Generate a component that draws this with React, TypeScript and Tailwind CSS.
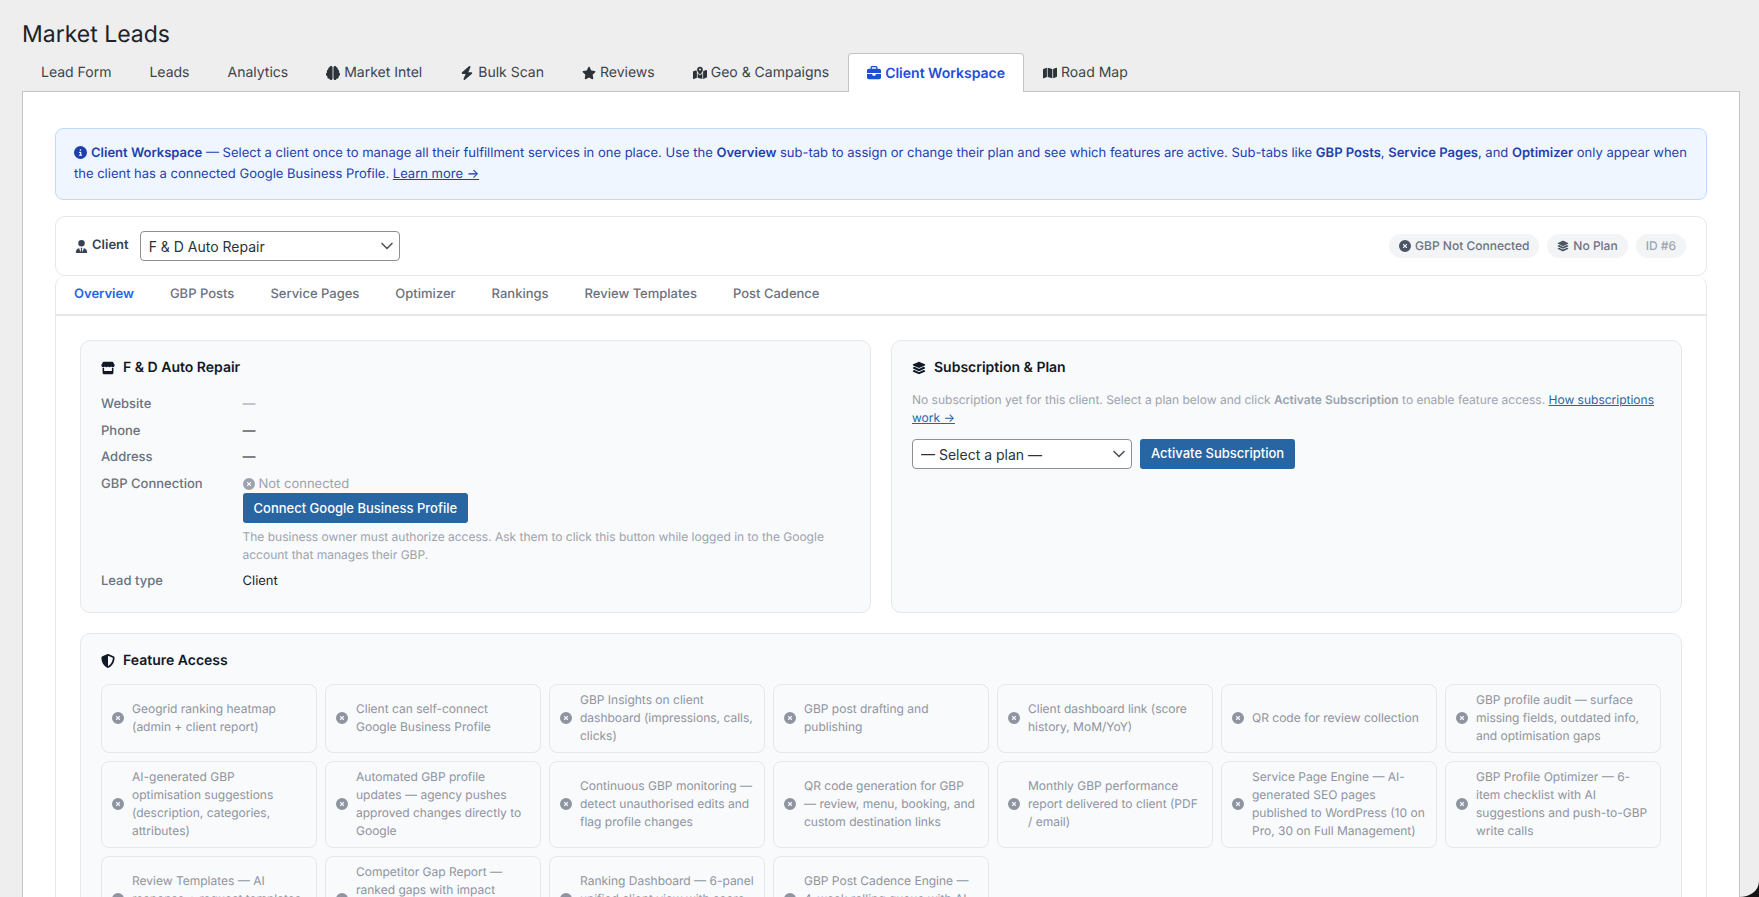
import React from "react";
import { ChevronDown } from "lucide-react";
import {
  FaBrain, FaBolt, FaStar, FaMapLocationDot, FaBriefcase, FaMap, FaCircleInfo, FaUserTie,
  FaCircleXmark, FaLayerGroup, FaStore, FaShieldHalved,
} from "react-icons/fa6";

const tabs: { label: string; Icon?: React.ComponentType<{ className?: string }>; active?: boolean }[] = [
  { label: "Lead Form" },
  { label: "Leads" },
  { label: "Analytics" },
  { label: "Market Intel", Icon: FaBrain },
  { label: "Bulk Scan", Icon: FaBolt },
  { label: "Reviews", Icon: FaStar },
  { label: "Geo & Campaigns", Icon: FaMapLocationDot },
  { label: "Client Workspace", Icon: FaBriefcase, active: true },
  { label: "Road Map", Icon: FaMap },
];

const subTabs = ["Overview", "GBP Posts", "Service Pages", "Optimizer", "Rankings", "Review Templates", "Post Cadence"];

const features = [
  "Geogrid ranking heatmap (admin + client report)",
  "Client can self-connect Google Business Profile",
  "GBP Insights on client dashboard (impressions, calls, clicks)",
  "GBP post drafting and publishing",
  "Client dashboard link (score history, MoM/YoY)",
  "QR code for review collection",
  "GBP profile audit — surface missing fields, outdated info, and optimisation gaps",
  "AI-generated GBP optimisation suggestions (description, categories, attributes)",
  "Automated GBP profile updates — agency pushes approved changes directly to Google",
  "Continuous GBP monitoring — detect unauthorised edits and flag profile changes",
  "QR code generation for GBP — review, menu, booking, and custom destination links",
  "Monthly GBP performance report delivered to client (PDF / email)",
  "Service Page Engine — AI-generated SEO pages published to WordPress (10 on Pro, 30 on Full Management)",
  "GBP Profile Optimizer — 6-item checklist with AI suggestions and push-to-GBP write calls",
  "Review Templates — AI response + request templates per client",
  "Competitor Gap Report — ranked gaps with impact scores and one-click fix actions",
  "Ranking Dashboard — 6-panel unified client view with score trends",
  "GBP Post Cadence Engine — 4-week rolling queue with AI drafts",
];

function Row({ label, children }: { label: string; children: React.ReactNode }) {
  return (
    <div className="flex py-1 text-[13px] leading-[18.5px]">
      <div className="w-[141.5px] shrink-0 font-medium text-[#6b7280]">{label}</div>
      <div className="min-w-0 flex-1 text-[#1d2327]">{children}</div>
    </div>
  );
}

function Chevron() {
  return (
    <ChevronDown className="pointer-events-none absolute right-[3px] top-1/2 h-5 w-5 -translate-y-1/2 text-[#50575e]" />
  );
}

function Button({ children }: { children: React.ReactNode }) {
  return (
    <button className="h-[30px] rounded-[3px] bg-[#2865a3] px-[11px] text-[13px] font-medium text-white">
      {children}
    </button>
  );
}

export default function App() {
  return (
    <div className="relative h-[897px] overflow-hidden bg-[#eeeeef] pl-[22px] pr-[19px] pt-[22px] font-[Inter,'Liberation_Sans',sans-serif] [text-rendering:geometricPrecision]">
      <h1 className="mb-[7px] text-[23px] font-normal leading-[24px] text-[#1d2327]">Market Leads</h1>

      <div className="relative z-10 flex h-[39px] items-stretch">
        {tabs.map(({ label, Icon, active }) => (
          <div
            key={label}
            className={
              active
                ? "flex h-[39px] items-center gap-1 rounded-t-[4px] border border-b-0 border-[#c3c4c7] bg-white px-[18px] text-[14px] font-semibold text-[#1d4ed8]"
                : "flex h-[38px] items-center gap-1 border border-transparent border-b-0 px-[18px] text-[14px] text-[#3c434a]"
            }
          >
            {Icon && <Icon className={active ? "h-[14px] w-auto" : "h-[14px] w-auto text-[#2c3338]"} />}
            {label}
          </div>
        ))}
      </div>

      <div className="-mt-px min-h-[900px] border border-[#c3c4c7] bg-white px-[32px] pt-[36px]">
        <div className="mb-4 rounded-[8px] border border-[#bfdbfe] bg-[#eff6ff] px-[18px] py-[14px] text-[13px] leading-[21px] text-[#1e40af]">
          <FaCircleInfo className="mr-1 inline h-[13px] w-[13px] align-[-2px]" />
          <strong className="font-semibold">Client Workspace</strong> — Select a client once to manage all their fulfillment services in one place. Use the{" "}
          <strong className="font-semibold">Overview</strong> sub-tab to assign or change their plan and see which features are active. Sub-tabs like{" "}
          <strong className="font-semibold">GBP Posts</strong>, <strong className="font-semibold">Service Pages</strong>, and{" "}
          <strong className="font-semibold">Optimizer</strong> only appear when the client has a connected Google Business Profile.{" "}
          <a className="underline">Learn more →</a>
        </div>

        <div className="flex h-[60px] items-center rounded-[10px] border border-[#e5e7eb] bg-white pl-[19px] pr-[20px]">
          <div className="flex items-center gap-1 text-[13px] font-semibold text-[#374151]">
            <FaUserTie className="h-[13px] w-auto" />
            Client
          </div>
          <div className="relative ml-[11px] h-[30px] w-[260px]">
            <select className="h-full w-full appearance-none rounded-[4px] border border-[#8c8f94] bg-white pl-2 text-[14px] text-[#2c3338]">
              <option>F &amp; D Auto Repair</option>
            </select>
            <Chevron />
          </div>
          <div className="ml-auto flex items-center gap-2">
            <span className="flex h-6 items-center gap-1 rounded-full bg-[#f3f4f6] px-[10px] text-[12px] font-medium text-[#6b7280]">
              <FaCircleXmark className="h-3 w-3 text-[#4b5563]" />
              GBP Not Connected
            </span>
            <span className="flex h-6 items-center gap-1 rounded-full bg-[#f3f4f6] px-[10px] text-[12px] font-medium text-[#6b7280]">
              <FaLayerGroup className="h-3 w-3 text-[#4b5563]" />
              No Plan
            </span>
            <span className="flex h-6 items-center rounded-full bg-[#f3f4f6] px-[10px] text-[12px] font-medium text-[#9ca3af]">
              ID #6
            </span>
          </div>
        </div>

        <div className="rounded-t-[10px] border-x border-[#e5e7eb] bg-white">
          <div className="flex h-[40px] items-center border-b-2 border-[#e5e7eb]">
            {subTabs.map((t, i) => (
              <div
                key={t}
                className={
                  i === 0
                    ? "px-[18px] text-[13px] font-semibold text-[#2563eb]"
                    : "px-[18px] text-[13px] font-medium text-[#6b7280]"
                }
              >
                {t}
              </div>
            ))}
          </div>

          <div className="px-6 pt-6">
            <div className="grid grid-cols-2 gap-5">
              <section className="rounded-[10px] border border-[#e5e7eb] bg-[#f9fafb] px-5 pb-[17px] pt-5">
                <h3 className="mb-4 flex items-center gap-[8px] text-[14px] font-semibold leading-[14px] text-[#111827]">
                  <FaStore className="h-[14px] w-auto" />
                  F &amp; D Auto Repair
                </h3>
                <Row label="Website"><span className="text-[#9ca3af]">—</span></Row>
                <Row label="Phone">—</Row>
                <Row label="Address">—</Row>
                <Row label="GBP Connection">
                  <div className="flex items-center gap-1 text-[#9ca3af]">
                    <FaCircleXmark className="h-3 w-3" />
                    Not connected
                  </div>
                  <Button>Connect Google Business Profile</Button>
                  <p className="mt-[5px] text-[12px] leading-[18px] text-[#9ca3af]">
                    The business owner must authorize access. Ask them to click this button while logged in to the Google account that manages their GBP.
                  </p>
                </Row>
                <Row label="Lead type">Client</Row>
              </section>

              <section className="rounded-[10px] border border-[#e5e7eb] bg-[#f9fafb] px-5 pt-5">
                <h3 className="mb-4 flex items-center gap-[8px] text-[14px] font-semibold leading-[14px] text-[#111827]">
                  <FaLayerGroup className="h-[14px] w-auto" />
                  Subscription &amp; Plan
                </h3>
                <p className="mb-3 text-[12px] leading-[18px] text-[#9ca3af]">
                  No subscription yet for this client. Select a plan below and click <strong className="font-semibold">Activate Subscription</strong> to enable feature access.{" "}
                  <a className="text-[#2865a3] underline">How subscriptions work →</a>
                </p>
                <div className="flex gap-2">
                  <div className="relative h-[30px] w-[220px]">
                    <select className="h-full w-full appearance-none rounded-[4px] border border-[#8c8f94] bg-white pl-2 text-[14px] text-[#2c3338]">
                      <option>— Select a plan —</option>
                    </select>
                    <Chevron />
                  </div>
                  <Button>Activate Subscription</Button>
                </div>
              </section>
            </div>

            <section className="mt-5 rounded-[10px] border border-[#e5e7eb] bg-[#f9fafb] p-5">
              <h3 className="mb-4 flex items-center gap-[8px] text-[14px] font-semibold leading-[14px] text-[#111827]">
                <FaShieldHalved className="h-[14px] w-auto" />
                Feature Access
              </h3>
              <div className="grid grid-cols-7 gap-2">
                {features.map((f) => (
                  <div
                    key={f}
                    className="flex items-center gap-2 rounded-[8px] border border-[#e5e7eb] bg-[#f9fafb] px-[10px] py-[6.5px] text-[12px] leading-[18px] text-[#8e94a0]"
                  >
                    <FaCircleXmark className="h-3 w-3 shrink-0 text-[#8e94a0]" />
                    <span>{f}</span>
                  </div>
                ))}
              </div>
            </section>
          </div>
        </div>
      </div>

      <svg className="absolute bottom-0 right-0 h-4 w-5" viewBox="0 0 20 16" aria-hidden="true">
        <path d="M20 0 V16 H0 C 11 16 20 10 20 0 Z" fill="#141414" />
      </svg>
    </div>
  );
}
